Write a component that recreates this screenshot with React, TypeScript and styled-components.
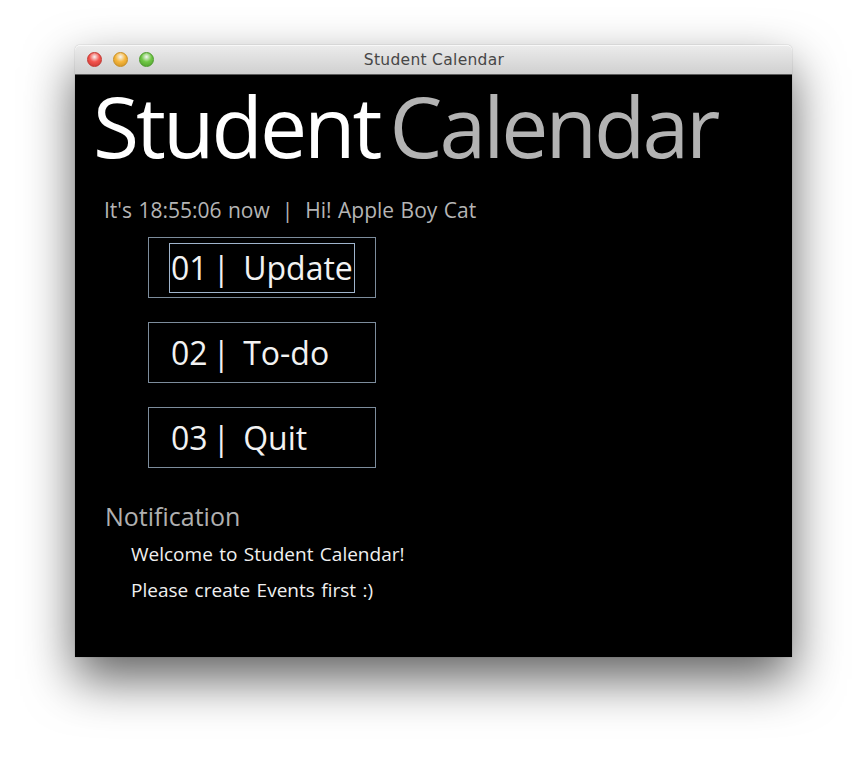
import React from "react";
import styled, { createGlobalStyle } from "styled-components";

const GlobalStyle = createGlobalStyle`
  html, body {
    margin: 0;
    padding: 0;
    background: #ffffff;
  }
  body {
    font-family: "Open Sans", "Noto Sans", sans-serif;
  }
`;

const Page = styled.div`
  width: 867px;
  height: 762px;
  padding: 45px 0 0 75px;
  box-sizing: border-box;
  overflow: hidden;
`;

const Window = styled.div`
  width: 717px;
  display: flex;
  flex-direction: column;
  border-radius: 5px 5px 0 0;
  box-shadow: 0 22px 50px rgba(0, 0, 0, 0.62), 0 0 1px rgba(0, 0, 0, 0.5);
`;

const TitleBar = styled.div`
  position: relative;
  height: 29px;
  display: flex;
  align-items: center;
  justify-content: center;
  border-radius: 5px 5px 0 0;
  background: linear-gradient(#ececec, #d0d0d0);
  border-bottom: 1px solid #5c5c5c;
  box-shadow: inset 0 1px 0 #f8f8f8;
`;

const Lights = styled.div`
  position: absolute;
  left: 12px;
  top: 7px;
  display: flex;
  gap: 11px;
`;

const Light = styled.div<{ $color: string; $edge: string }>`
  width: 15px;
  height: 15px;
  border-radius: 50%;
  box-sizing: border-box;
  border: 1px solid ${(p) => p.$edge};
  background: radial-gradient(circle at 50% 30%, #ffffffaa 0, ${(p) => p.$color} 45%, ${(p) => p.$edge} 100%);
`;

const WindowTitle = styled.div`
  font-family: "DejaVu Sans", "Liberation Sans", sans-serif;
  font-size: 15.5px;
  letter-spacing: 0.3px;
  color: #474747;
  margin-left: 1px;
`;

const Content = styled.div`
  height: 582px;
  background: #000;
  display: flex;
  flex-direction: column;
  box-sizing: border-box;
  padding: 9px 0 0 18px;
`;

const Heading = styled.h1`
  margin: 0;
  font-weight: 400;
  font-size: 84px;
  line-height: 1;
  letter-spacing: -3px;
  display: flex;
  gap: 10px;
`;

const HeadWord = styled.span<{ $dim?: boolean }>`
  color: ${(p) => (p.$dim ? "#b3b3b3" : "#ffffff")};
`;

const Status = styled.div`
  margin: 28px 0 0 11px;
  font-size: 21px;
  word-spacing: 1px;
  color: #b5b5b5;
  display: flex;
  align-items: center;
`;

const Sep = styled.span`
  margin: 0 12px;
`;

const Menu = styled.div`
  display: flex;
  flex-direction: column;
  gap: 24px;
  margin: 13px 0 0 55px;
`;

const MenuButton = styled.button`
  width: 228px;
  height: 61px;
  box-sizing: border-box;
  background: #000;
  border: 1px solid #7c8c9c;
  padding: 0 0 0 20px;
  display: flex;
  align-items: center;
  cursor: pointer;
  font-family: "Open Sans", "Noto Sans", sans-serif;
  font-size: 32px;
  color: #f2f2f2;
`;

const Label = styled.span<{ $focused?: boolean }>`
  display: flex;
  align-items: center;
  height: 50px;
  padding: 0 1px;
  box-sizing: border-box;
  border: 1px solid ${(p) => (p.$focused ? "#9fb4cc" : "transparent")};
`;

const Bar = styled.span`
  margin: 0 13px 0 5px;
`;

const NoteTitle = styled.div`
  margin: 31px 0 0 12px;
  font-size: 25px;
  color: #b0b0b0;
`;

const NoteList = styled.div`
  display: flex;
  flex-direction: column;
  margin: 3px 0 0 38px;
`;

const NoteLine = styled.div`
  font-size: 19px;
  word-spacing: 1.5px;
  color: #f0f0f0;
  line-height: 36px;
`;

const items = [
  { no: "01", label: "Update", focused: true },
  { no: "02", label: "To-do" },
  { no: "03", label: "Quit" },
];

const notes = ["Welcome to Student Calendar!", "Please create Events first :)"];

export default function App() {
  return (
    <>
      <GlobalStyle />
      <Page>
        <Window>
          <TitleBar>
            <Lights>
              <Light $color="#f4544e" $edge="#c23630" />
              <Light $color="#f6b63c" $edge="#c98e22" />
              <Light $color="#70c845" $edge="#4c9a2c" />
            </Lights>
            <WindowTitle>Student Calendar</WindowTitle>
          </TitleBar>
          <Content>
            <Heading>
              <HeadWord>Student</HeadWord>
              <HeadWord $dim>Calendar</HeadWord>
            </Heading>
            <Status>
              It's 18:55:06 now<Sep>|</Sep>Hi! Apple Boy Cat
            </Status>
            <Menu>
              {items.map((it) => (
                <MenuButton key={it.no}>
                  <Label $focused={it.focused}>
                    {it.no}
                    <Bar>|</Bar>
                    {it.label}
                  </Label>
                </MenuButton>
              ))}
            </Menu>
            <NoteTitle>Notification</NoteTitle>
            <NoteList>
              {notes.map((n) => (
                <NoteLine key={n}>{n}</NoteLine>
              ))}
            </NoteList>
          </Content>
        </Window>
      </Page>
    </>
  );
}
